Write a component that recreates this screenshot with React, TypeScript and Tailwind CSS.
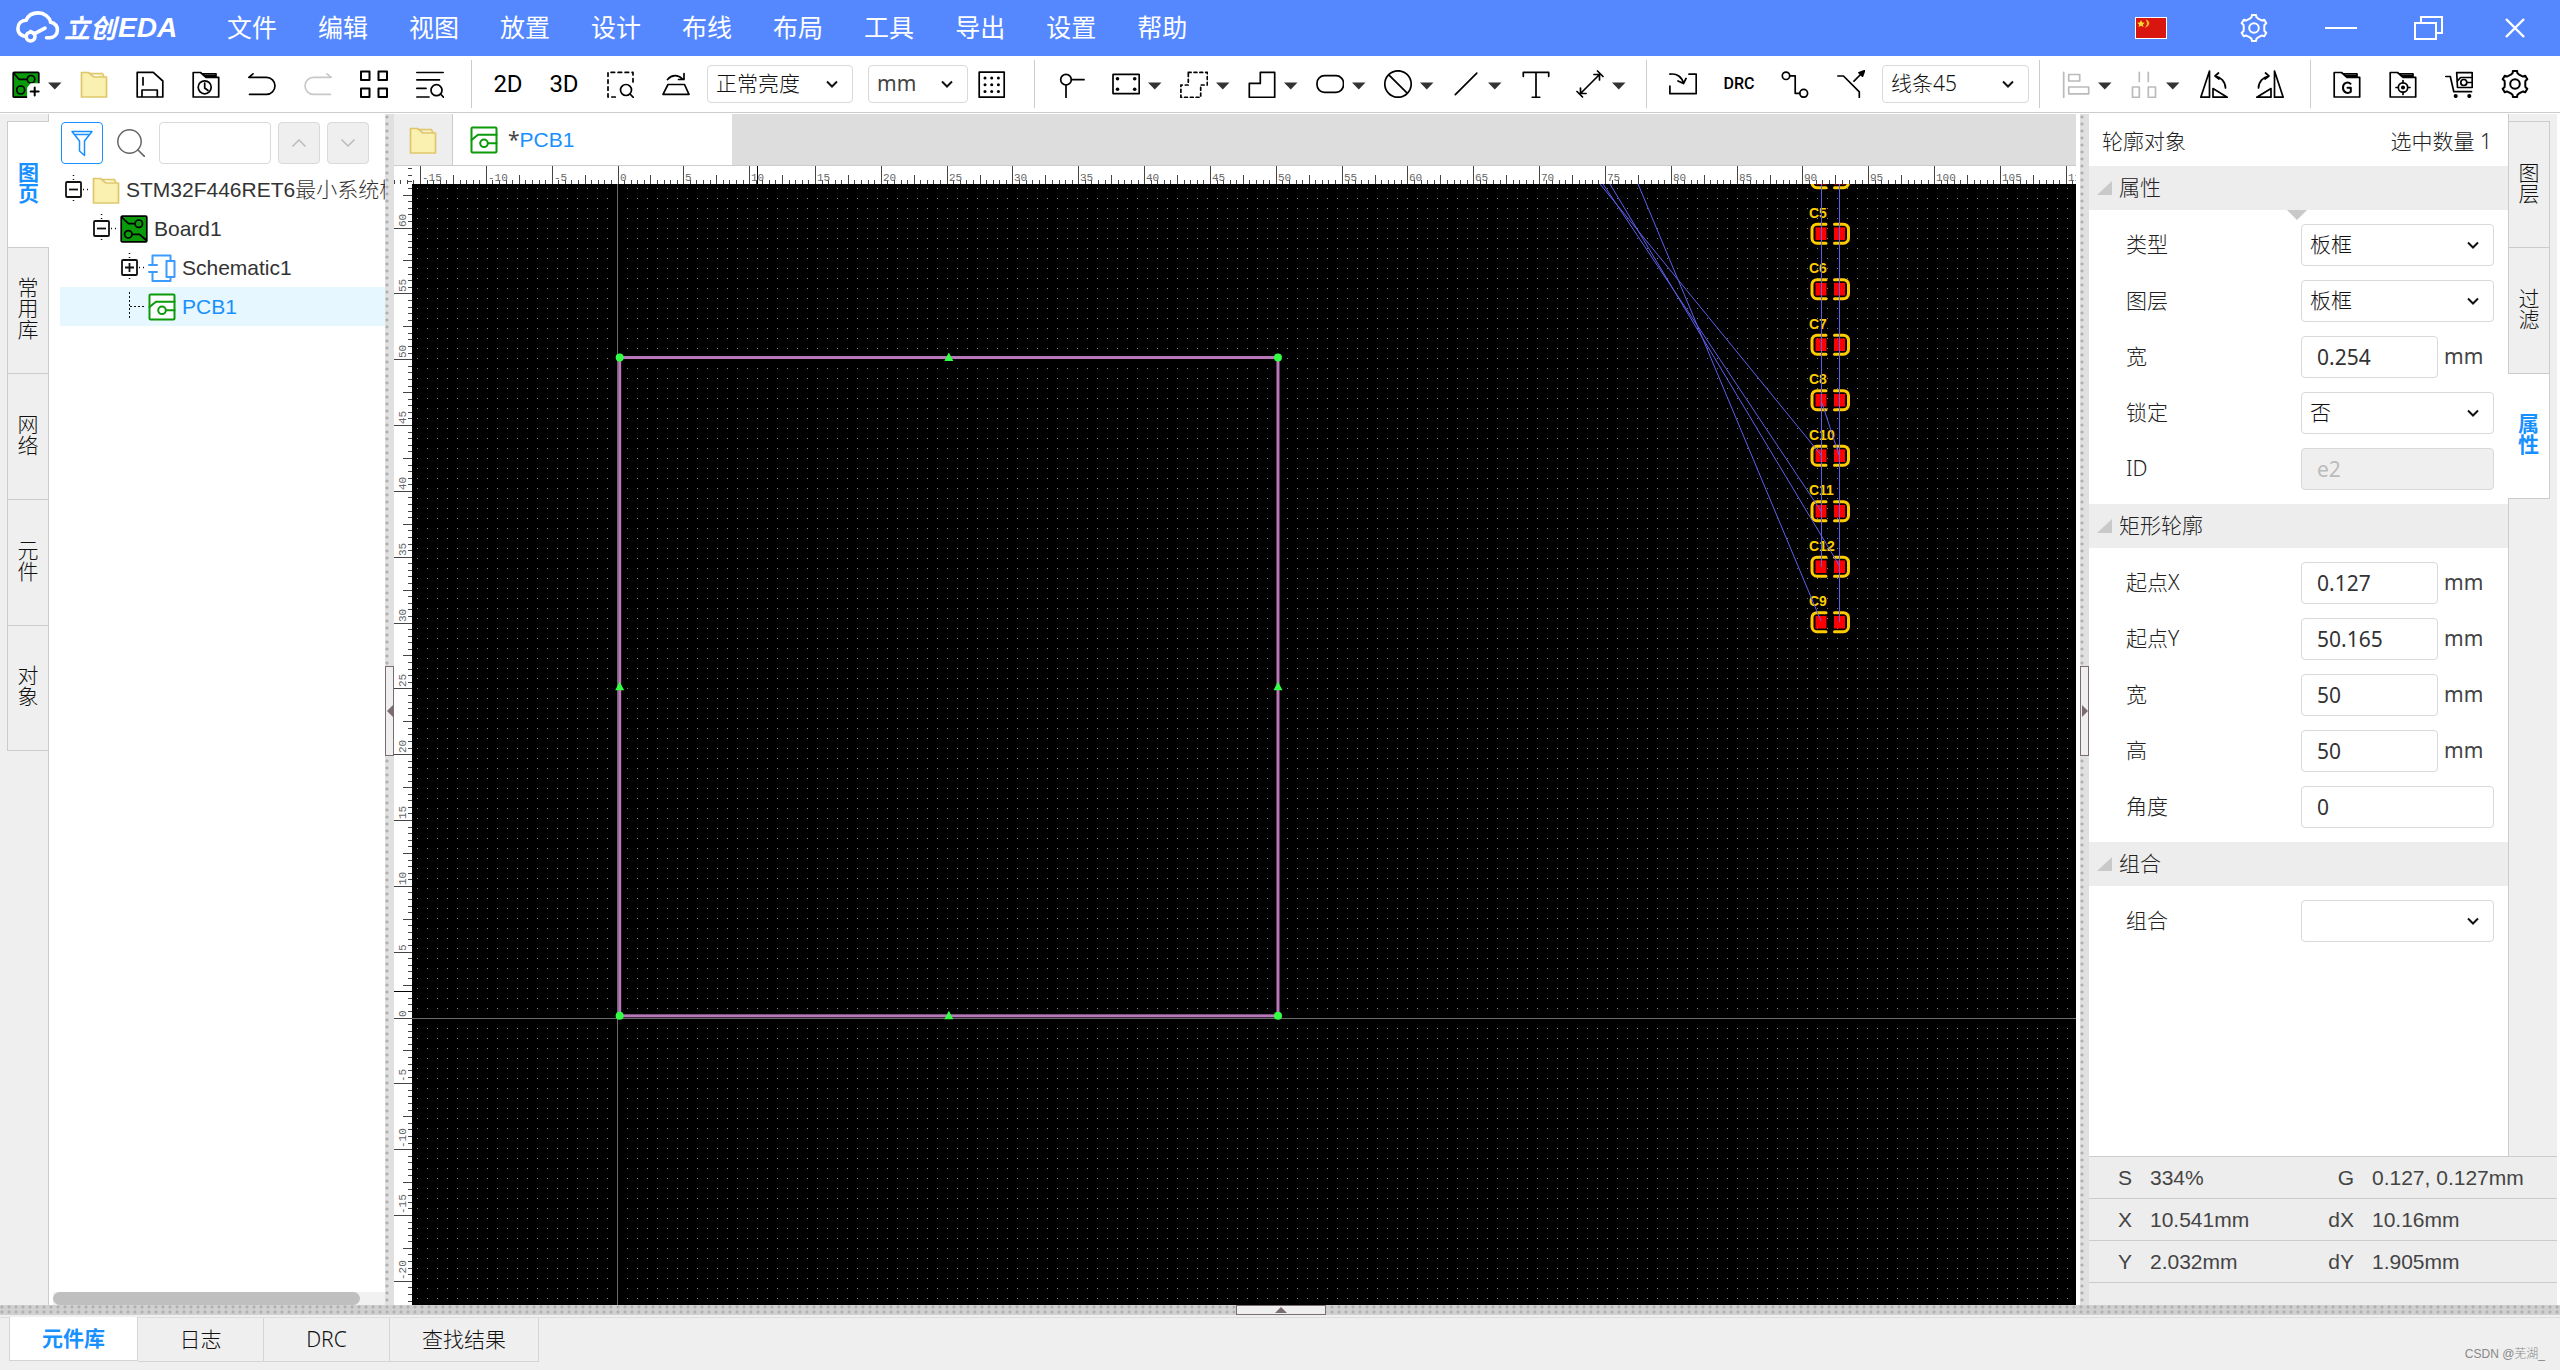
import type { ReactNode } from "react";
import clsx from "clsx";

const SCALE = 13.166; // px per mm at 334%
const ORIGIN = { x: 206, y: 834 }; // board origin inside the canvas
const RULER = 18;

const MENUS = ["文件", "编辑", "视图", "放置", "设计", "布线", "布局", "工具", "导出", "设置", "帮助"];
const LEFT_TABS = ["图页", "常用库", "网络", "元件", "对象"];
const RIGHT_TABS = ["图层", "过滤", "属性"];
const CAPS = ["", "C5", "C6", "C7", "C8", "C10", "C11", "C12", "C9"]; // first one is scrolled half out of view

const STATUS = [
  ["S", "334%", "G", "0.127, 0.127mm"],
  ["X", "10.541mm", "dX", "10.16mm"],
  ["Y", "2.032mm", "dY", "1.905mm"],
];

/* ---------- icons ---------- */

function Icon({ children, className }: { children: ReactNode; className?: string }) {
  return (
    <svg
      viewBox="0 0 28 28"
      className={clsx("h-7 w-7 shrink-0", className)}
      fill="none"
      stroke="currentColor"
      strokeWidth="1.7"
      strokeLinecap="round"
      strokeLinejoin="round"
      aria-hidden="true"
    >
      {children}
    </svg>
  );
}

function gearPath() {
  const pts: string[] = [];
  const corners = [
    [-21, 10.4],
    [-13, 11],
    [-9, 13.2],
    [9, 13.2],
    [13, 11],
    [21, 10.4],
  ];
  for (let i = 0; i < 6; i++) {
    for (const [da, r] of corners) {
      const a = ((-90 + i * 60 + da) * Math.PI) / 180;
      pts.push(`${(14 + r * Math.cos(a)).toFixed(2)} ${(14 + r * Math.sin(a)).toFixed(2)}`);
    }
  }
  return `M${pts.join("L")}Z`;
}

const GearIcon = () => (
  <Icon>
    <path d={gearPath()} strokeWidth="2" />
    <circle cx="14" cy="14" r="4.8" strokeWidth="2" />
  </Icon>
);

const FolderIcon = () => (
  <Icon className="text-[#dfc66b]">
    <path d="M10 3.5H22.5L24 7" fill="#faf0b0" />
    <path d="M1.5 27V2.5H8.5L14 7H26.5V27Z" fill="#faf0b0" />
  </Icon>
);

const FolderOutline = () => <path d="M1.2 27V2.5H8.5L14 7.4H26.7V27ZM10 3.8H24V7M12 5.8H23" />;

const BoardIcon = () => (
  <Icon className="text-black">
    <rect x="1.2" y="1.2" width="25.6" height="25.6" rx="1" fill="#0a9a0a" />
    <path d="M2 2.5L8.5 8.7H15M12 19.3H19.5L26 25" />
    <circle cx="18.8" cy="8.7" r="3.7" />
    <circle cx="8.3" cy="19.3" r="3.7" />
  </Icon>
);

const NewBoardIcon = () => (
  <Icon>
    <rect x="1.2" y="2.4" width="25.6" height="24.8" rx="1" fill="#0a9a0a" />
    <path d="M2 3.5L7 9.3H15" />
    <circle cx="19" cy="9.3" r="3.8" />
    <circle cx="8.7" cy="20" r="4" />
    <path d="M16 28V18L19 14H28V28Z" fill="#fff" stroke="#fff" />
    <path d="M22.7 17.5v8M18.7 21.5h8" strokeWidth="2" />
  </Icon>
);

const PcbIcon = () => (
  <Icon className="text-[#0a9a0a]">
    <rect x="1.5" y="1.5" width="25" height="25" rx="1" strokeWidth="2" fill="#fff" />
    <path d="M1.5 14L8 8.7H26.5M18 17.3H26.5" strokeWidth="2" />
    <circle cx="14" cy="17.3" r="3.8" strokeWidth="2" />
  </Icon>
);

const SchematicIcon = () => (
  <Icon className="text-[#3d9bff]">
    <path d="M4.5 11V1.5H22.5V7M22.5 23V27H4.5V18M1 11H9M1 18H9" strokeWidth="2" />
    <rect x="18.5" y="7" width="8" height="16" strokeWidth="2" />
  </Icon>
);

const Caret = () => (
  <svg viewBox="0 0 14 8" className="h-2 w-3.5 fill-[#333]" aria-hidden="true">
    <path d="M0 0.5H13.5L6.8 7.5Z" />
  </svg>
);

const RotateLeft = () => (
  <>
    <path d="M0.8 27.2L9.5 1V27.2ZM13 18.5L27.2 27.2H13Z" />
    <path d="M15 6C21 7 25.5 12 25.5 18M18.5 3L15 6L19 9" />
  </>
);

/* ---------- toolbar pieces ---------- */

type ToolProps = { label: string; children: ReactNode; menu?: boolean; className?: string };

function Tool({ label, children, menu, className }: ToolProps) {
  return (
    <button
      type="button"
      aria-label={label}
      className={clsx(
        "flex h-14 shrink-0 items-center",
        menu ? "gap-2 pl-3" : "justify-center",
        className ?? (menu ? "w-[68px]" : "w-14"),
      )}
    >
      {children}
      {menu && (
        <span className="pt-1">
          <Caret />
        </span>
      )}
    </button>
  );
}

const Divider = ({ className }: { className: string }) => (
  <span className={clsx("h-12 w-px shrink-0 bg-[#ccc]", className)} />
);

type PickProps = { id: string; label: string; value: string; className?: string; hideLabel?: boolean };

function Pick({ id, label, value, className, hideLabel }: PickProps) {
  return (
    <span className={clsx("relative block shrink-0", className)}>
      <select
        id={id}
        aria-label={hideLabel ? label : undefined}
        defaultValue={value}
        className={clsx(
          "h-full w-full appearance-none rounded-sm border border-[#d9d9d9] bg-white pl-2 text-[21px]",
          value === "mm" ? "font-normal text-[#444]" : "text-[#111]",
        )}
      >
        <option>{value}</option>
      </select>
      <svg
        viewBox="0 0 12 8"
        className="pointer-events-none absolute top-1/2 right-[15px] h-2 w-3 -translate-y-1/2"
        fill="none"
        stroke="#111"
        strokeWidth="2"
        aria-hidden="true"
      >
        <path d="M1 1.5L6 6.5L11 1.5" />
      </svg>
    </span>
  );
}

function TitleBar() {
  return (
    <header className="flex h-14 shrink-0 items-center overflow-hidden bg-[#5588ff] pl-4 text-white">
      <div className="flex w-[211px] shrink-0 items-center">
        <svg
          viewBox="0 0 44 34"
          className="h-[34px] w-11"
          fill="none"
          stroke="currentColor"
          strokeWidth="3.6"
          strokeLinecap="round"
          aria-hidden="true"
        >
          <path d="M8.5 25.2C4 24 1.9 21 1.9 17.5c0-5 3.6-8 8.2-8.3C12.2 4.5 16.6 1.9 22 1.9c6.4 0 11.4 4 12.7 9.4 4 1 6.7 4 6.7 7.7 0 4.4-3 7.3-7.4 7.8h-3.5" />
          <circle cx="14.6" cy="25.6" r="4.4" />
          <path d="M14.6 20.5L18.6 22.6L29 17.2" />
        </svg>
        <span className="ml-1 text-[26px] leading-8 font-bold italic">立创</span>
        <span className="ml-0.5 font-['Liberation_Sans',sans-serif] text-[28px] leading-8 font-bold italic">EDA</span>
      </div>
      <nav className="flex gap-[41px] pb-0.5">
        {MENUS.map((m) => (
          <button key={m} type="button" className="text-[25px] leading-8 font-normal whitespace-nowrap">
            {m}
          </button>
        ))}
      </nav>
      <div className="ml-auto flex shrink-0 items-center pr-[35px]">
        <svg viewBox="0 0 32 22" className="mr-[73px] h-[22px] w-8" aria-label="中文">
          <rect x="0.5" y="0.5" width="31" height="21" fill="#d9150f" stroke="#fff" />
          <path d="M6 3l1.2 2.4 2.6.3-1.9 1.8.5 2.6L6 8.8l-2.4 1.3.5-2.6L2.2 5.7l2.6-.3z" fill="#ffdf2b" />
          <path d="M10.5 2.5c5 1 5.5 6.5-1 8.5 3-3 3-5.5 1-8.5z" fill="#f7b32b" />
        </svg>
        <button type="button" aria-label="设置" className="mr-[57px]">
          <GearIcon />
        </button>
        <button type="button" aria-label="最小化" className="mr-[57px]">
          <svg viewBox="0 0 32 28" className="h-7 w-8" stroke="currentColor" strokeWidth="2">
            <path d="M0 14H32" />
          </svg>
        </button>
        <button type="button" aria-label="还原" className="mr-[61px]">
          <svg viewBox="0 0 30 26" className="h-[26px] w-[30px]" fill="none" stroke="currentColor" strokeWidth="2">
            <path d="M7 7V2H28V18H23" />
            <rect x="1" y="8" width="21" height="16" />
          </svg>
        </button>
        <button type="button" aria-label="关闭">
          <svg viewBox="0 0 20 20" className="h-5 w-5" stroke="currentColor" strokeWidth="2.4">
            <path d="M1 1L19 19M19 1L1 19" />
          </svg>
        </button>
      </div>
    </header>
  );
}

function Toolbar() {
  return (
    <div className="mb-px flex h-[57px] shrink-0 items-center overflow-hidden border-b border-[#ccc] bg-white text-black">
      <Tool label="新建" menu className="w-[66px]">
        <NewBoardIcon />
      </Tool>
      <Tool label="打开">
        <FolderIcon />
      </Tool>
      <Tool label="保存">
        <Icon>
          <path d="M1.2 27V2.4H17.3L26.8 11V27ZM7 7.5V15M6 27V20H21.3V27" />
        </Icon>
      </Tool>
      <Tool label="历史">
        <Icon>
          <FolderOutline />
          <circle cx="12.7" cy="17.3" r="6.5" />
          <path d="M12.7 13V18L16 20.5" />
        </Icon>
      </Tool>
      <Tool label="撤销">
        <Icon>
          <path d="M5 3.8L0.8 7.3H18.5A8.5 8.5 0 0 1 18.5 24.3H1.5" />
        </Icon>
      </Tool>
      <Tool label="重做">
        <Icon className="text-[#c8c8c8]">
          <path d="M23 3.8L27.2 7.3H9.5A8.5 8.5 0 0 0 9.5 24.3H26.5" />
        </Icon>
      </Tool>
      <Tool label="视图列表">
        <Icon>
          <path
            d="M1 1.5H9.5V10H1ZM18.5 1.5H27V10H18.5ZM1 18.5H9.5V27H1ZM18.5 18.5H27V27H18.5Z"
            strokeWidth="2"
          />
        </Icon>
      </Tool>
      <Tool label="查找">
        <Icon>
          <path d="M0.8 2.5H27.2M0.8 9.8H23.5M0.8 18.4H10M0.8 27H13M24.5 24L27.5 27.3" />
          <circle cx="20.5" cy="20.2" r="5.5" />
        </Icon>
      </Tool>
      <Divider className="mr-2 ml-[13px]" />
      <Tool label="2D">
        <span className="font-[Roboto,sans-serif] text-2xl font-normal">2D</span>
      </Tool>
      <Tool label="3D">
        <span className="font-[Roboto,sans-serif] text-2xl font-normal">3D</span>
      </Tool>
      <Tool label="框选缩放">
        <Icon>
          <path d="M27 12V2.4H2V27H12" strokeDasharray="3.5 3.5" />
          <circle cx="20" cy="20" r="5.5" />
          <path d="M24 24L27.3 27.3" />
        </Icon>
      </Tool>
      <Tool label="翻转板子">
        <Icon>
          <path d="M6 14.5H22.5L27 24.3H1ZM5.5 9.5C10 4.5 16 4.5 20.5 9M22 3.5V9.5H16.5" />
        </Icon>
      </Tool>
      <Pick id="brightness" label="亮度" value="正常亮度" hideLabel className="ml-[3px] h-[38px] w-[146px]" />
      <Pick id="unit" label="单位" value="mm" hideLabel className="ml-[15px] h-[38px] w-[100px]" />
      <Tool label="网格" className="w-12">
        <Icon>
          <rect x="1.2" y="2.2" width="25" height="25" />
          {[8, 14.7, 21.4].map((y) =>
            [7, 13.7, 20.4].map((x) => (
              <circle key={`${x}-${y}`} cx={x} cy={y} r="1.5" fill="currentColor" stroke="none" />
            )),
          )}
        </Icon>
      </Tool>
      <Divider className="mr-[9px] ml-[18px]" />
      <Tool label="焊盘">
        <Icon>
          <circle cx="8" cy="9.7" r="5.3" />
          <path d="M13.5 9.7H26M8 15.2V27.5" />
        </Icon>
      </Tool>
      <Tool label="封装" menu>
        <Icon>
          <rect x="1" y="4.3" width="26.2" height="19.4" rx="0.5" />
          {[5.5, 22.7].map((x) => (
            <g key={x} fill="currentColor" stroke="none">
              <circle cx={x} cy="8.7" r="1.8" />
              <circle cx={x} cy="19.3" r="1.8" />
            </g>
          ))}
        </Icon>
      </Tool>
      <Tool label="铺铜" menu>
        <Icon>
          <path d="M8.3 2.4H27.3V15H20.7V27.3H0.9V15H8.3Z" strokeDasharray="2.8 3" />
        </Icon>
      </Tool>
      <Tool label="填充" menu>
        <Icon>
          <path d="M1.3 13.4H12.3V2.4H26.7V27.3H1.3Z" />
        </Icon>
      </Tool>
      <Tool label="板框" menu>
        <Icon>
          <rect x="1" y="5.7" width="26.5" height="16.6" rx="7.5" />
        </Icon>
      </Tool>
      <Tool label="禁止区域" menu>
        <Icon>
          <circle cx="14" cy="14" r="13.2" />
          <path d="M4.8 4.8L23.2 23.2" />
        </Icon>
      </Tool>
      <Tool label="线条" menu>
        <Icon>
          <path d="M3.3 24.7L24.8 3.2" />
        </Icon>
      </Tool>
      <Tool label="文本">
        <Icon>
          <path d="M1.3 6.3V2.4H26.7V6.3M14 2.4V27.3M10.3 27.3H17.7" />
        </Icon>
      </Tool>
      <Tool label="尺寸" menu>
        <Icon>
          <path d="M4 24L24 4M4.5 18V23.5H10M18 4.5H23.5V10M1 21.5L6.5 27M21.5 1L27 6.5" />
        </Icon>
      </Tool>
      <Divider className="mr-2 ml-[14px]" />
      <Tool label="导入变更">
        <Icon>
          <path d="M0.9 16V23.7H27.2V4.2H20M0.9 4.2C8 3 13 7 14.5 13.5M9 11L14.5 13.5L17 8.5" />
        </Icon>
      </Tool>
      <Tool label="DRC">
        <span className="font-[Roboto,sans-serif] text-base font-medium">DRC</span>
      </Tool>
      <Tool label="布线">
        <Icon>
          <circle cx="5" cy="5.8" r="3.7" />
          <circle cx="22.7" cy="23.3" r="3.9" />
          <path d="M8.8 5.8H14.2V23.3H18.7" />
        </Icon>
      </Tool>
      <Tool label="扇出">
        <Icon>
          <path d="M0.8 6H6.5L22.3 21.8V27.3M17 11.2L25 3" />
          <path d="M27.5 0.7L25.5 6.2L22 2.7Z" fill="currentColor" />
        </Icon>
      </Tool>
      <Pick id="corner" label="拐角" value="线条45" hideLabel className="ml-[3px] h-[38px] w-[147px]" />
      <Divider className="mr-2.5 ml-[10px]" />
      <Tool label="对齐" menu>
        <Icon className="text-[#bbb]">
          <path d="M1.7 2.4V27.3M6.7 4.5H17.7V11H6.7ZM6.7 17H26.7V23.8H6.7Z" />
        </Icon>
      </Tool>
      <Tool label="分布" menu>
        <Icon className="text-[#bbb]">
          <path d="M9.3 2.4V11.5M18.3 2.4V11.5M2.5 17H9.3V27.3H2.5ZM18.3 17H25.5V27.3H18.3Z" />
        </Icon>
      </Tool>
      <Tool label="左旋转">
        <Icon>
          <RotateLeft />
        </Icon>
      </Tool>
      <Tool label="右旋转">
        <Icon className="-scale-x-100">
          <RotateLeft />
        </Icon>
      </Tool>
      <Divider className="mr-2 ml-3" />
      <Tool label="导出 Gerber">
        <Icon>
          <FolderOutline />
          <path d="M17.5 13.8C15.5 11.8 10 12 10 17.5S15 24 17.8 21.7V17.8H14.5" strokeWidth="2" />
        </Icon>
      </Tool>
      <Tool label="导出坐标">
        <Icon>
          <FolderOutline />
          <circle cx="14" cy="17.5" r="4.7" />
          <circle cx="14" cy="17.5" r="1.2" fill="currentColor" />
          <path d="M14 10.5V12.5M14 22.5V24.5M7 17.5H9M19 17.5H21" />
        </Icon>
      </Tool>
      <Tool label="下单">
        <Icon>
          <path d="M0.8 6.5H5.3L8.8 21.7H26.5M11.7 2.6H27.2V17.5H12.5ZM12 11.5L15.5 7.5H27M22 12.5H27" />
          <circle cx="18.8" cy="12.5" r="3" />
          <circle cx="10.7" cy="26" r="1.2" fill="currentColor" />
          <circle cx="24.3" cy="26" r="1.2" fill="currentColor" />
        </Icon>
      </Tool>
      <Tool label="偏好设置">
        <GearIcon />
      </Tool>
    </div>
  );
}

/* ---------- left panel ---------- */

function LeftTabs() {
  return (
    <div className="flex w-[49px] shrink-0 flex-col border-r border-[#ccc] bg-[#efefef] pt-[7px] pl-[7px]">
      {LEFT_TABS.map((t, i) => (
        <button
          key={t}
          type="button"
          className={clsx(
            "flex h-[126px] shrink-0 items-center justify-center border-t border-l border-[#ccc] pb-1",
            i === 0 ? "-mr-px bg-white font-bold text-[#1890ff]" : "text-[#111]",
            i === LEFT_TABS.length - 1 && "border-b",
          )}
        >
          <span className="w-[21px] text-[21px] leading-[21px] break-all">{t}</span>
        </button>
      ))}
    </div>
  );
}

type NodeProps = { depth: string; open?: boolean; leaf?: boolean; icon: ReactNode; name: string; active?: boolean };

function TreeRow({ depth, open, leaf, icon, name, active }: NodeProps) {
  return (
    <li
      className={clsx(
        "flex h-[39px] items-center whitespace-nowrap",
        depth,
        active ? "bg-[#e6f7ff] text-[#1890ff]" : "text-[#333]",
      )}
    >
      <svg viewBox="0 0 28 39" className="h-[39px] w-7 shrink-0" fill="none" stroke="#111" aria-hidden="true">
        {leaf ? (
          <path d="M13.5 5V32M14 19.5H28" strokeDasharray="2 2" />
        ) : (
          <>
            <path d="M13.5 5V11M13.5 30V34M23 19.5H28" strokeDasharray="1 3" strokeWidth="1.5" />
            <rect x="6" y="12" width="15" height="15" strokeWidth="1.8" rx="1" />
            <path d={open ? "M9 19.5H18" : "M9 19.5H18M13.5 15V24"} strokeWidth="1.8" />
          </>
        )}
      </svg>
      <span className="ml-1">{icon}</span>
      <span className="ml-1.5 text-[21px] leading-8">{name}</span>
    </li>
  );
}

function ProjectPanel() {
  return (
    <aside className="flex w-[336px] shrink-0 flex-col overflow-hidden bg-white font-['Liberation_Sans','Noto_Sans_CJK_SC',sans-serif]">
      <div className="flex items-center pt-2 pb-1.5 pl-3">
        <button
          type="button"
          aria-label="过滤"
          className="flex h-[42px] w-[42px] items-center justify-center rounded border border-[#1890ff] text-[#1890ff]"
        >
          <Icon>
            <path d="M4 2.5H24L16.5 12V26.5L11.5 22V12ZM4 2.5L6.5 5.5H21.5" strokeWidth="1.5" />
          </Icon>
        </button>
        <Icon className="mx-[14px] text-[#666]">
          <circle cx="12.5" cy="12.5" r="11.7" strokeWidth="1.5" />
          <path d="M21 21L27.5 27.5" />
        </Icon>
        <input aria-label="搜索" className="h-[42px] w-28 rounded border border-[#d9d9d9] px-2 text-[21px]" />
        <button
          type="button"
          aria-label="上一个"
          className="ml-[7px] flex h-[42px] w-[42px] items-center justify-center rounded border border-[#d9d9d9] bg-[#efefef] text-[#bbb]"
        >
          <svg viewBox="0 0 14 8" className="h-2 w-3.5" fill="none" stroke="currentColor" strokeWidth="1.5">
            <path d="M0.5 7.5L7 1L13.5 7.5" />
          </svg>
        </button>
        <button
          type="button"
          aria-label="下一个"
          className="ml-[7px] flex h-[42px] w-[42px] items-center justify-center rounded border border-[#d9d9d9] bg-[#efefef] text-[#bbb]"
        >
          <svg viewBox="0 0 14 8" className="h-2 w-3.5" fill="none" stroke="currentColor" strokeWidth="1.5">
            <path d="M0.5 0.5L7 7L13.5 0.5" />
          </svg>
        </button>
      </div>
      <ul className="ml-[11px] overflow-hidden">
        <TreeRow depth="pl-0" open icon={<FolderIcon />} name="STM32F446RET6最小系统板" />
        <TreeRow depth="pl-7" open icon={<BoardIcon />} name="Board1" />
        <TreeRow depth="pl-14" icon={<SchematicIcon />} name="Schematic1" />
        <TreeRow depth="pl-14" leaf icon={<PcbIcon />} name="PCB1" active />
      </ul>
      <div className="mt-auto ml-1 bg-[#f1f1f1]">
        <div className="h-[13px] w-[307px] rounded-full bg-[#bfbfbf]" />
      </div>
    </aside>
  );
}

/* ---------- splitters ---------- */

function Splitter({ side }: { side: "left" | "right" }) {
  return (
    <div className="relative w-[9px] shrink-0 bg-[#e0e0e0] bg-[radial-gradient(circle_at_2px_3px,#b0b0b0_1px,transparent_2px)] bg-[length:9px_7px]">
      <button
        type="button"
        aria-label={side === "left" ? "收起左侧" : "收起右侧"}
        className="absolute top-[552px] left-0 flex h-[90px] w-[9px] items-center justify-center border border-[#7a6d72] bg-[#efefef]"
      >
        <svg viewBox="0 0 6 12" className={clsx("h-3 w-1.5 fill-[#7a6d72]", side === "right" && "-scale-x-100")}>
          <path d="M6 0V12L0 6Z" />
        </svg>
      </button>
    </div>
  );
}

/* ---------- canvas ---------- */

const toX = (mm: number) => ORIGIN.x + mm * SCALE;
const toY = (mm: number) => ORIGIN.y - mm * SCALE;

function range(from: number, to: number) {
  return Array.from({ length: to - from + 1 }, (_, i) => from + i);
}

// ticks every 0.5mm, longer at 2.5mm and full size at 5mm
function tickLength(step: number) {
  if (step % 10 === 0) return RULER;
  return step % 5 === 0 ? 9 : 4;
}

function TopRuler() {
  return (
    <svg className="block h-[18px] w-full shrink-0 bg-white" aria-hidden="true">
      <g stroke="#444" shapeRendering="crispEdges">
        {range(-34, 600).map((s) => {
          const x = Math.floor(RULER + toX(s / 2)) + 0.5;
          return <line key={s} x1={x} x2={x} y1={RULER - tickLength(s)} y2={RULER} />;
        })}
        {range(126, 129).map((s) => {
          const y = Math.floor(RULER + toY(s / 2)) + 0.5;
          return <line key={s} x1={RULER - 4} x2={RULER} y1={y} y2={y} />;
        })}
        <line x1={363.5} x2={363.5} y1="0" y2={RULER} stroke="#000" />
      </g>
      <g className="fill-[#666] font-['Liberation_Mono',monospace] text-[11px] font-normal">
        {range(-3, 22).map((n) => (
          <text key={n} x={Math.floor(RULER + toX(n * 5)) + 2} y="15">
            {n * 5}
          </text>
        ))}
      </g>
    </svg>
  );
}

function SideRuler() {
  return (
    <svg className="block h-full w-[18px] shrink-0 bg-white" aria-hidden="true">
      <g stroke="#444" shapeRendering="crispEdges">
        {range(-160, 126).map((s) => {
          const y = Math.floor(toY(s / 2)) + 0.5;
          return <line key={s} x1={RULER - tickLength(s)} x2={RULER} y1={y} y2={y} />;
        })}
        <line x1="0" x2={RULER} y1={807.5} y2={807.5} stroke="#000" />
      </g>
      <g className="fill-[#666] font-['Liberation_Mono',monospace] text-[11px] font-normal">
        {range(-4, 12).map((n) => (
          <text key={n} transform={`translate(12 ${Math.floor(toY(n * 5)) - 1}) rotate(-90)`}>
            {n * 5}
          </text>
        ))}
      </g>
    </svg>
  );
}

function Capacitor({ name, y }: { name: string; y: number }) {
  return (
    <g>
      <g fill="none" stroke="#ffcc00" strokeWidth="3" strokeLinecap="round">
        <path d={`M1414 ${y - 9.5}h-9a5 5 0 0 0-5 5v9a5 5 0 0 0 5 5h9`} />
        <path d={`M1422.5 ${y - 9.5}h9a5 5 0 0 1 5 5v9a5 5 0 0 1-5 5h-9`} />
      </g>
      <g fill="#f00">
        <rect x="1403.5" y={y - 6.3} width="11" height="12.6" />
        <rect x="1422" y={y - 6.3} width="11" height="12.6" />
      </g>
      {name && (
        <text x="1397" y={y - 16} className="fill-[#ffcc00] font-['Liberation_Sans',sans-serif] text-sm font-bold">
          {name}
        </text>
      )}
    </g>
  );
}

function BoardCanvas() {
  const left = toX(0.127);
  const right = toX(50.127);
  const top = toY(50.165);
  const bottom = toY(0.165);
  const midX = (left + right) / 2;
  const midY = (top + bottom) / 2;

  return (
    <svg className="block h-full min-w-0 flex-1 bg-black" role="img" aria-label="PCB1">
      <defs>
        <pattern id="dots" x="5" y="4" width="10" height="10" patternUnits="userSpaceOnUse">
          <rect width="1" height="1" fill="#888" />
        </pattern>
      </defs>
      <rect width="100%" height="100%" fill="url(#dots)" />
      <g stroke="#6a6a6a" shapeRendering="crispEdges">
        <line x1={ORIGIN.x - 0.5} x2={ORIGIN.x - 0.5} y1="0" y2="100%" />
        <line x1="0" x2="100%" y1={ORIGIN.y + 0.5} y2={ORIGIN.y + 0.5} />
      </g>

      {CAPS.map((name, i) => (
        <Capacitor key={i} name={name} y={-5.8 + i * 55.5} />
      ))}
      <path
        d="M1409.5 0V383M1427.5 0V438M1410 219L1427 271M1188 0L1409 271M1191 0L1409 327M1198 0L1427 381M1226 0L1409 437"
        fill="none"
        stroke="#5f5fee"
      />

      <rect
        x={left}
        y={top}
        width={right - left}
        height={bottom - top}
        fill="none"
        stroke="#b978b9"
        strokeWidth="3"
      />
      <g fill="#33ff44">
        {[left, right].map((x) => (
          <g key={x}>
            <circle cx={x} cy={top} r="4" />
            <circle cx={x} cy={bottom} r="4" />
            <path d={`M${x} ${midY - 5}l4.5 8.5h-9z`} />
          </g>
        ))}
        {[top, bottom].map((y) => (
          <path key={y} d={`M${midX} ${y - 5}l4.5 8.5h-9z`} />
        ))}
      </g>
    </svg>
  );
}

function Editor() {
  return (
    <main className="mr-1 flex min-w-0 flex-1 flex-col">
      <div className="flex h-[52px] shrink-0 border-b border-[#ccc] bg-[#ddd]">
        <button
          type="button"
          aria-label="打开工程"
          className="flex w-[59px] shrink-0 items-center justify-center border-r border-[#ccc] bg-[#eee]"
        >
          <FolderIcon />
        </button>
        <button
          type="button"
          className="flex w-[279px] shrink-0 items-center bg-white pl-[17px] text-[21px] text-[#444]"
        >
          <PcbIcon />
          <span className="ml-2.5 font-['Noto_Sans',sans-serif] font-normal">*</span>
          <span className="font-['Liberation_Sans',sans-serif] text-[#1890ff]">PCB1</span>
        </button>
      </div>
      <TopRuler />
      <div className="flex min-h-0 flex-1">
        <SideRuler />
        <BoardCanvas />
      </div>
    </main>
  );
}

/* ---------- right panel ---------- */

function Section({ title, children }: { title: string; children: ReactNode }) {
  return (
    <section>
      <h2 className="flex h-11 items-center bg-[#ededed] pl-2 text-[21px] text-[#222]">
        <svg viewBox="0 0 15 14" className="mr-[7px] h-3.5 w-[15px] fill-[#c9c9c9]" aria-hidden="true">
          <path d="M15 0V14H0Z" />
        </svg>
        {title}
      </h2>
      <div className="flex flex-col gap-3.5 py-3.5 pr-3.5 pl-[37px]">{children}</div>
    </section>
  );
}

type FieldProps = {
  id: string;
  label: string;
  value: string;
  kind?: "select" | "text";
  unit?: string;
  disabled?: boolean;
};

function Field({ id, label, value, kind = "text", unit, disabled }: FieldProps) {
  return (
    <div className="flex h-[42px] items-center justify-between text-[21px] text-[#222]">
      <label htmlFor={id}>{label}</label>
      <div className="flex w-[193px] items-center">
        {kind === "select" ? (
          <Pick id={id} label={label} value={value} className="h-[42px] w-full" />
        ) : (
          <input
            id={id}
            defaultValue={value}
            disabled={disabled}
            className={clsx(
              "h-[42px] rounded-sm border border-[#d9d9d9] px-[15px] font-normal",
              unit ? "w-[137px]" : "w-full",
              disabled ? "bg-[#efefef] text-[#bbb]" : "text-[#333]",
            )}
          />
        )}
        {unit && <span className="ml-1.5 font-normal text-[#444]">{unit}</span>}
      </div>
    </div>
  );
}

function PropertyPanel() {
  return (
    <div className="min-w-0 flex-1 bg-white">
      <div className="flex h-[52px] items-center justify-between pt-1 pr-4 pl-[13px] text-[21px] text-[#222]">
        <span>轮廓对象</span>
        <span>选中数量 1</span>
      </div>
      <div className="relative">
        <span className="absolute top-11 left-[198px] border-x-10 border-t-10 border-x-transparent border-t-[#c9c9c9]" />
        <Section title="属性">
          <Field id="type" label="类型" value="板框" kind="select" />
          <Field id="layer" label="图层" value="板框" kind="select" />
          <Field id="line-width" label="宽" value="0.254" unit="mm" />
          <Field id="locked" label="锁定" value="否" kind="select" />
          <Field id="object-id" label="ID" value="e2" disabled />
        </Section>
        <Section title="矩形轮廓">
          <Field id="start-x" label="起点X" value="0.127" unit="mm" />
          <Field id="start-y" label="起点Y" value="50.165" unit="mm" />
          <Field id="rect-width" label="宽" value="50" unit="mm" />
          <Field id="rect-height" label="高" value="50" unit="mm" />
          <Field id="angle" label="角度" value="0" />
        </Section>
        <Section title="组合">
          <Field id="group" label="组合" value="" kind="select" />
        </Section>
      </div>
    </div>
  );
}

function RightTabs() {
  return (
    <div className="flex w-[49px] shrink-0 flex-col border-l border-[#ccc] bg-[#efefef] pt-[7px] pr-[7px]">
      {RIGHT_TABS.map((t) => {
        const active = t === "属性";
        return (
          <button
            key={t}
            type="button"
            className={clsx(
              "flex h-[126px] shrink-0 items-center justify-center border-t border-r border-[#ccc] pb-1",
              active ? "-ml-px border-b bg-white font-bold text-[#1890ff]" : "text-[#111]",
            )}
          >
            <span className="w-[21px] text-[21px] leading-[21px] break-all">{t}</span>
          </button>
        );
      })}
    </div>
  );
}

function StatusGrid() {
  return (
    <dl className="shrink-0 border-t border-[#ccc] bg-[#ededed] pb-[22px] font-['Liberation_Sans',sans-serif] text-[21px] font-normal text-[#444]">
      {STATUS.map(([a, av, b, bv]) => (
        <div
          key={a}
          className="grid h-[42px] grid-cols-[43px_1fr_40px_185px] items-center gap-x-[18px] border-b border-[#ccc]"
        >
          <dt className="text-right">{a}</dt>
          <dd>{av}</dd>
          <dt className="text-right">{b}</dt>
          <dd>{bv}</dd>
        </div>
      ))}
    </dl>
  );
}

/* ---------- bottom ---------- */

function BottomBar() {
  return (
    <footer className="relative shrink-0 bg-[#efefef]">
      <div className="relative h-2.5 bg-[#d0d0d0] bg-[radial-gradient(circle_at_2px_2px,#b0b0b0_1px,transparent_2px)] bg-[length:7px_5px]">
        <button
          type="button"
          aria-label="收起底部"
          className="absolute top-0 left-[1236px] flex h-2.5 w-[90px] items-center justify-center border border-[#7a6d72] bg-[#efefef]"
        >
          <svg viewBox="0 0 12 6" className="h-1.5 w-3 fill-[#7a6d72]">
            <path d="M0 6H12L6 0Z" />
          </svg>
        </button>
      </div>
      <div className="mt-0.5 flex h-[53px] border-t border-[#ddd] pl-[9px] text-[21px] text-[#111]">
        {[
          ["元件库", "w-[129px] -mt-px border-l bg-white font-bold text-[#1890ff]"],
          ["日志", "w-[126px]"],
          ["DRC", "w-[126px]"],
          ["查找结果", "w-[149px]"],
        ].map(([name, look]) => (
          <button key={name} type="button" className={clsx("h-11 border-r border-b border-[#d4d4d4]", look)}>
            {name}
          </button>
        ))}
      </div>
      <span className="absolute right-[15px] bottom-1.5 font-['Liberation_Sans','Noto_Sans_CJK_SC',sans-serif] text-xs leading-5 text-[#888]">
        CSDN @芜湖_
      </span>
    </footer>
  );
}

export default function App() {
  return (
    <div className="flex h-screen flex-col overflow-hidden bg-white font-['Noto_Sans','Noto_Sans_CJK_SC',sans-serif] font-light">
      <TitleBar />
      <Toolbar />
      <div className="flex min-h-0 flex-1">
        <LeftTabs />
        <ProjectPanel />
        <Splitter side="left" />
        <Editor />
        <Splitter side="right" />
        <aside className="mr-[3px] flex w-[468px] shrink-0 flex-col">
          <div className="flex min-h-0 flex-1">
            <PropertyPanel />
            <RightTabs />
          </div>
          <StatusGrid />
        </aside>
      </div>
      <BottomBar />
    </div>
  );
}
